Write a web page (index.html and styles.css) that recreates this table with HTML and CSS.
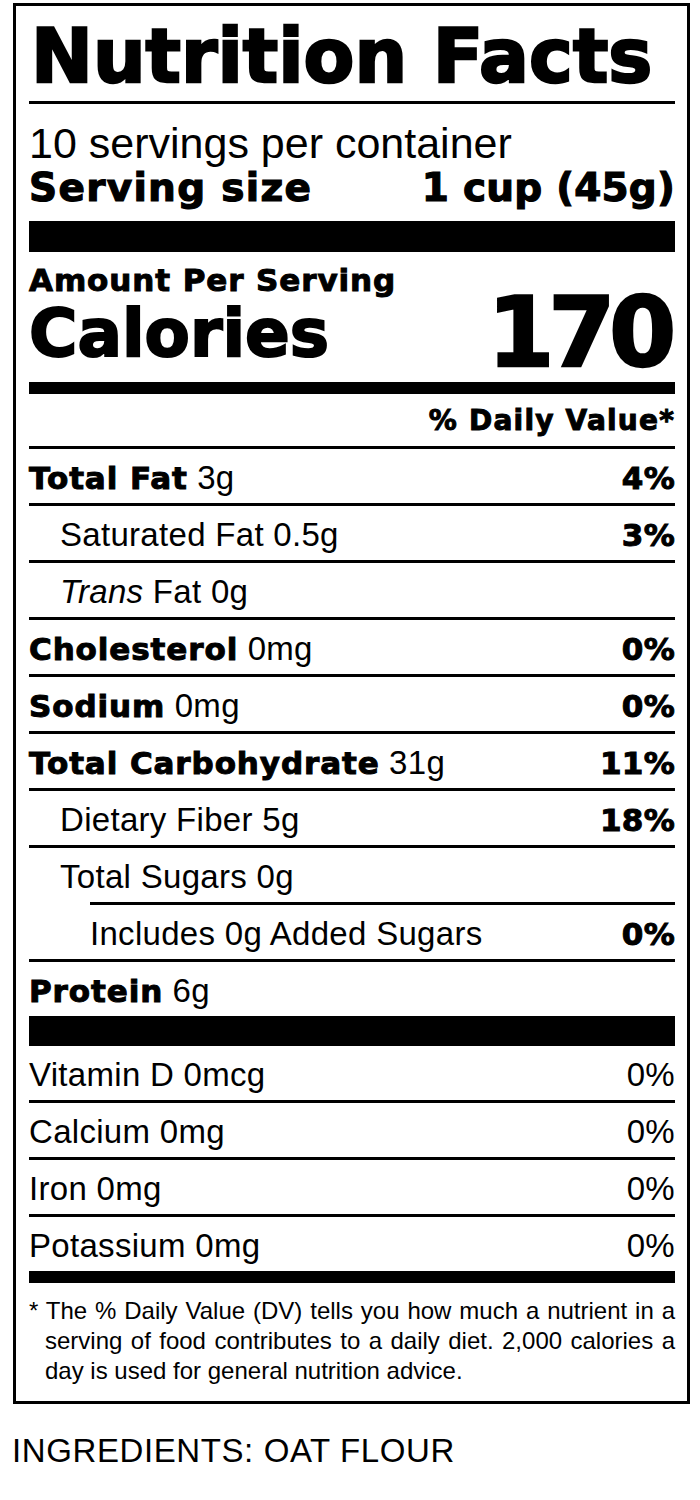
FILE: index.html
```html
<!DOCTYPE html>
<html lang="en">
<head>
<meta charset="utf-8">
<title>Nutrition Facts</title>
<link rel="stylesheet" href="styles.css">
</head>
<body>
<section class="label">
  <h1 class="title">Nutrition Facts</h1>
  <div class="rule-thin"></div>
  <p class="servings">10 servings per container</p>
  <div class="serving-size"><span>Serving size</span><span>1 cup (45g)</span></div>
  <div class="bar bar-thick"></div>
  <div class="cal-block">
    <div class="cal-left">
      <div class="amount">Amount Per Serving</div>
      <div class="calories">Calories</div>
    </div>
    <div class="cal-value">170</div>
  </div>
  <div class="bar bar-med"></div>
  <div class="dv-head">% Daily Value*</div>
  <div class="nutrients">
    <div class="row"><span><b>Total Fat</b> 3g</span><b>4%</b></div>
    <div class="row indent1"><span>Saturated Fat 0.5g</span><b>3%</b></div>
    <div class="row indent1"><span><i>Trans</i> Fat 0g</span></div>
    <div class="row"><span><b>Cholesterol</b> 0mg</span><b>0%</b></div>
    <div class="row"><span><b>Sodium</b> 0mg</span><b>0%</b></div>
    <div class="row"><span><b>Total Carbohydrate</b> 31g</span><b>11%</b></div>
    <div class="row indent1"><span>Dietary Fiber 5g</span><b>18%</b></div>
    <div class="row indent1"><span>Total Sugars 0g</span></div>
    <div class="row indent2"><span>Includes 0g Added Sugars</span><b>0%</b></div>
    <div class="row"><span><b>Protein</b> 6g</span></div>
  </div>
  <div class="bar bar-big"></div>
  <div class="vitamins">
    <div class="row first"><span>Vitamin D 0mcg</span><span>0%</span></div>
    <div class="row"><span>Calcium 0mg</span><span>0%</span></div>
    <div class="row"><span>Iron 0mg</span><span>0%</span></div>
    <div class="row"><span>Potassium 0mg</span><span>0%</span></div>
  </div>
  <div class="bar bar-med2"></div>
  <p class="footnote">* The % Daily Value (DV) tells you how much a nutrient in a serving of food contributes to a daily diet. 2,000 calories a day is used for general nutrition advice.</p>
</section>
<p class="ingredients">INGREDIENTS: OAT FLOUR</p>
</body>
</html>
```

FILE: styles.css
```css
* {
  margin: 0;
  padding: 0;
  box-sizing: border-box;
}

body {
  margin: 0;
  background: #fff;
  color: #000;
  font-family: "Liberation Sans", Arial, sans-serif;
}

.label {
  margin: 3px 0 0 13px;
  width: 677px;
  border: 3px solid #000;
  padding: 10px 12px 15px 13px;
}

.title {
  font-family: "DejaVu Sans", sans-serif;
  font-weight: 700;
  font-size: 74px;
  line-height: 80px;
  white-space: nowrap;
  -webkit-text-stroke: 2.4px #000;
  padding-left: 2px;
}

.rule-thin {
  height: 3px;
  background: #000;
  margin-top: 5px;
}

.servings {
  font-size: 43px;
  line-height: 46px;
  margin-top: 16px;
}

.serving-size {
  display: flex;
  justify-content: space-between;
  font-family: "DejaVu Sans", sans-serif;
  font-weight: 700;
  font-size: 39px;
  line-height: 44px;
  letter-spacing: 1.3px;
  -webkit-text-stroke: 1.2px #000;
}

.serving-size span:last-child {
  letter-spacing: 0.2px;
}

.bar {
  background: #000;
}

.bar-thick {
  height: 31px;
  margin-top: 11px;
}

.cal-block {
  display: flex;
  justify-content: space-between;
  align-items: flex-end;
  margin-top: 10px;
  font-family: "DejaVu Sans", sans-serif;
  font-weight: 700;
}

.amount {
  font-size: 31px;
  line-height: 36px;
  letter-spacing: 0.9px;
  -webkit-text-stroke: 1px #000;
}

.calories {
  font-size: 66px;
  line-height: 72px;
  -webkit-text-stroke: 2px #000;
}

.cal-value {
  font-size: 96px;
  line-height: 74px;
  letter-spacing: -6px;
  padding-right: 5px;
  -webkit-text-stroke: 2.6px #000;
}

.bar-med {
  height: 12px;
  margin-top: 12px;
}

.dv-head {
  text-align: right;
  font-family: "DejaVu Sans", sans-serif;
  font-weight: 700;
  font-size: 28px;
  line-height: 34px;
  letter-spacing: 1.2px;
  margin-top: 10px;
  -webkit-text-stroke: 1px #000;
}

.nutrients {
  margin-top: 8px;
}

.row {
  display: flex;
  justify-content: space-between;
  align-items: baseline;
  border-top: 3px solid #000;
  padding-top: 3px;
  height: 57px;
  font-size: 33px;
  line-height: 51px;
  letter-spacing: 0.3px;
  white-space: nowrap;
}

.row b {
  font-family: "DejaVu Sans", sans-serif;
  font-weight: 700;
  font-size: 31px;
  letter-spacing: 0.9px;
  -webkit-text-stroke: 1px #000;
}

.row > b:last-child {
  letter-spacing: 0.3px;
}

.row i {
  font-style: italic;
}

.indent1 {
  padding-left: 31px;
}

.indent2 {
  margin-left: 61px;
}

.bar-big {
  height: 30px;
}

.vitamins .first {
  border-top: none;
  height: 54px;
}

.bar-med2 {
  height: 12px;
}

.footnote {
  font-size: 24px;
  line-height: 30px;
  padding-left: 16px;
  text-indent: -16px;
  text-align: justify;
  margin-top: 13px;
}

.ingredients {
  font-size: 33px;
  line-height: 38px;
  letter-spacing: 0.6px;
  margin: 28px 0 0 12px;
}
```
